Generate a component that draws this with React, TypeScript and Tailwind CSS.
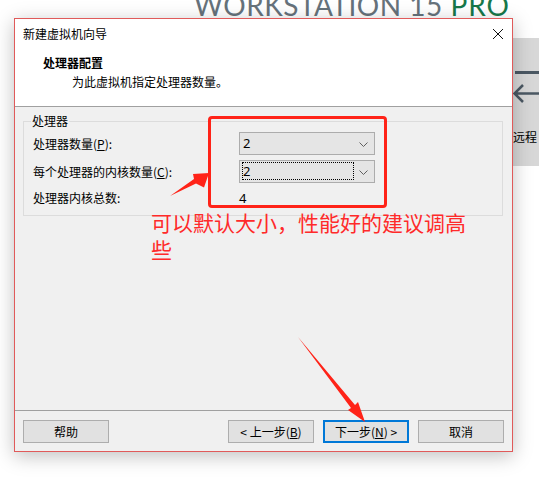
import React from "react";

function Combo({ value, focused }: { value: string; focused?: boolean }) {
  return (
    <div className="relative flex h-[23px] w-[136px] items-center justify-between border border-[#acacac] bg-[#e5e5e5] pl-[3px] pr-[6px]">
      <span className="font-['Noto_Sans',sans-serif] text-[13px] leading-none">{value}</span>
      <svg width="9" height="5" viewBox="0 0 9 5" className="mt-[1px]">
        <path d="M0.5 0.5 L4.5 4.5 L8.5 0.5" fill="none" stroke="#606060" strokeWidth="1" />
      </svg>
      {focused && (
        <div className="absolute left-[2px] top-[1px] bottom-[2px] right-[20px] border border-dotted border-black" />
      )}
    </div>
  );
}

function Button({ children, primary }: { children: React.ReactNode; primary?: boolean }) {
  return (
    <div
      className={
        primary
          ? "flex h-[23px] w-[86px] items-center justify-center border-2 border-[#0078d7] bg-[#e1e1e1]"
          : "flex h-[23px] w-[86px] items-center justify-center border border-[#adadad] bg-[#e1e1e1]"
      }
    >
      {children}
    </div>
  );
}

export default function App() {
  return (
    <div className="relative h-[477px] w-[539px] overflow-hidden bg-white font-['Noto_Sans_CJK_SC',sans-serif] text-[12px] leading-[16px] text-black">
      {/* 背景：产品标题 */}
      <div className="absolute left-[194px] top-[-9px] whitespace-nowrap font-['Lato',sans-serif] text-[28px] leading-none tracking-[0.5px] text-[#66727b]">
        WORKSTATION 15 <span className="tracking-[1px] text-[#17784a]">PRO</span>
        <span className="relative top-[-8px] ml-px align-top text-[10px] tracking-normal text-[#17784a]">TM</span>
      </div>

      {/* 背景：右侧面板 */}
      <div className="absolute left-[505px] top-[38px] flex h-[128px] w-[40px] flex-col bg-[#d7d7d7] pl-[8px]">
        <svg width="30" height="70" viewBox="0 0 30 70" className="mt-[24px]">
          <path d="M2 10.5 H30" stroke="#4b5863" strokeWidth="3" />
          <path d="M1.5 31.5 H30 M10 23 L1.5 31.5 L10 40" fill="none" stroke="#4b5863" strokeWidth="2.5" />
        </svg>
        <span className="mt-[-3px] whitespace-nowrap">远程</span>
      </div>

      {/* 向导对话框 */}
      <div className="absolute left-[14px] top-[18px] flex h-[434px] w-[499px] flex-col border border-[#e05a5a] bg-[#f0f0f0] shadow-[0_4px_18px_rgba(0,0,0,0.25)]">
        <div className="bg-white">
          <div className="flex h-[29px] items-center justify-between pl-[8px] pr-[9px]">
            <span>新建虚拟机向导</span>
            <svg width="10" height="10" viewBox="0 0 10 10">
              <path d="M0 0 L10 10 M10 0 L0 10" stroke="#111" strokeWidth="1" />
            </svg>
          </div>
          <div className="h-[58px] pt-[7px]">
            <div className="pl-[28px] font-bold">处理器配置</div>
            <div className="mt-[3px] pl-[57px]">为此虚拟机指定处理器数量。</div>
          </div>
        </div>
        <div className="h-px bg-[#a0a0a0]" />

        <div className="flex-1 pl-[8px] pr-[9px] pt-[14px]">
          <div className="relative flex flex-col gap-[5px] border border-[#dcdcdc] pb-[7px] pl-[9px] pt-[10px]">
            <span className="absolute left-[7px] top-[-9px] bg-[#f0f0f0] px-px">处理器</span>
            <div className="flex h-[23px] items-center">
              <span className="w-[206px]">
                处理器数量(<u>P</u>):
              </span>
              <Combo value="2" />
            </div>
            <div className="flex h-[23px] items-center">
              <span className="w-[206px]">
                每个处理器的内核数量(<u>C</u>):
              </span>
              <Combo value="2" focused />
            </div>
            <div className="flex h-[20px] items-center">
              <span className="w-[206px]">处理器内核总数:</span>
              <span className="font-['Noto_Sans',sans-serif] text-[13px]">4</span>
            </div>
          </div>
        </div>

        <div className="h-px bg-[#a0a0a0]" />
        <div className="flex h-[40px] items-start justify-between px-[8px] pt-[9px]">
          <Button>帮助</Button>
          <div className="flex gap-[9px]">
            <Button>
              &lt; 上一步(<u>B</u>)
            </Button>
            <Button primary>
              下一步(<u>N</u>) &gt;
            </Button>
            <Button>取消</Button>
          </div>
        </div>
      </div>

      {/* 标注 */}
      <div className="absolute left-[208px] top-[116px] h-[92px] w-[179px] rounded-[4px] border-[3px] border-[#ff2318]" />
      <div className="absolute left-[151px] top-[209px] w-[322px] text-[21px] leading-[27px] text-[#ff2a2a]">
        可以默认大小，性能好的建议调高些
      </div>
      <svg className="pointer-events-none absolute left-0 top-0" width="539" height="477" viewBox="0 0 539 477">
        <polygon points="170,196 196,183.5 204,187.5 209,173 193,174 194,179" fill="#ff2318" />
        <polygon points="298,337 355,405 358,402 365,422 348,410 351,408" fill="#ff2318" />
      </svg>
    </div>
  );
}
